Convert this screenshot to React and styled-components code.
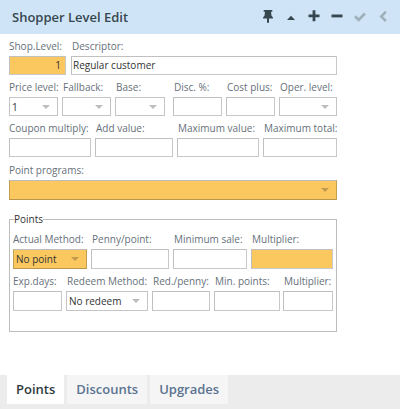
import styled, { createGlobalStyle } from "styled-components";

const YELLOW = "#fac85e";

const GlobalStyle = createGlobalStyle`
  html, body {
    margin: 0;
    padding: 0;
    background: #fff;
    font-family: "Open Sans", "Liberation Sans", sans-serif;
  }
`;

export default function App() {
  return (
    <>
      <GlobalStyle />
      <Page>
        <Header>
          <Title>Shopper Level Edit</Title>
          <Tools>
            <PinIcon />
            <UpIcon />
            <PlusIcon />
            <MinusIcon />
            <CheckIcon />
            <BackIcon />
          </Tools>
        </Header>

        <Form>
          <Row>
            <Field label="Shop.Level:" width={57} flush>
              <Input $yellow $right>1</Input>
            </Field>
            <Field label="Descriptor:" width={266} $push={1}>
              <Input>Regular customer</Input>
            </Field>
          </Row>

          <Row>
            <Field label="Price level:" width={49} flush>
              <Select value="1" />
            </Field>
            <Field label="Fallback:" width={49}>
              <Select />
            </Field>
            <Field label="Base:" width={50}>
              <Select />
            </Field>
            <Field label="Disc. %:" width={49} $push={4}>
              <Input />
            </Field>
            <Field label="Cost plus:" width={49}>
              <Input />
            </Field>
            <Field label="Oper. level:" width={58}>
              <Select />
            </Field>
          </Row>

          <Row>
            <Field label="Coupon multiply:" width={82} flush>
              <Input />
            </Field>
            <Field label="Add value:" width={78}>
              <Input />
            </Field>
            <Field label="Maximum value:" width={82}>
              <Input />
            </Field>
            <Field label="Maximum total:" width={74}>
              <Input />
            </Field>
          </Row>

          <WideRow>
            <Field label="Point programs:" width={328} flush>
              <Select yellow tall />
            </Field>
          </WideRow>

          <PointsBox>
            <PointsLegend>Points</PointsLegend>
            <BoxRow>
              <Field label="Actual Method:" width={74} flush>
                <Select yellow tall value="No point" />
              </Field>
              <Field label="Penny/point:" width={78}>
                <Input $tall />
              </Field>
              <Field label="Minimum sale:" width={74}>
                <Input $tall />
              </Field>
              <Field label="Multiplier:" width={82}>
                <Input $tall $yellow />
              </Field>
            </BoxRow>
            <BoxRow $second>
              <Field label="Exp.days:" width={49} flush>
                <Input $tall />
              </Field>
              <Field label="Redeem Method:" width={82}>
                <Select tall value="No redeem" />
              </Field>
              <Field label="Red./penny:" width={58}>
                <Input $tall />
              </Field>
              <Field label="Min. points:" width={66}>
                <Input $tall />
              </Field>
              <Field label="Multiplier:" width={50} $push={-1}>
                <Input $tall />
              </Field>
            </BoxRow>
          </PointsBox>
        </Form>

        <TabBar>
          <Tab $active>Points</Tab>
          <Tab>Discounts</Tab>
          <Tab>Upgrades</Tab>
        </TabBar>
      </Page>
    </>
  );
}

function Field({ label, width, flush, $push, children }) {
  return (
    <FieldBox style={{ width }} $push={$push}>
      <Label $flush={flush}>{label}</Label>
      {children}
    </FieldBox>
  );
}

function Select({ value, yellow, tall }) {
  return (
    <SelectBox $yellow={yellow} $tall={tall}>
      <span>{value}</span>
      <Caret $yellow={yellow} />
    </SelectBox>
  );
}

function ToolIcon({ color = "#37474f", children }) {
  return (
    <svg width="16" height="16" viewBox="0 0 16 16" fill={color}>
      {children}
    </svg>
  );
}

const PinIcon = () => (
  <ToolIcon>
    <path d="M3.700 2h8.600v1.700h-1.300l.5 4 1.400 1.500v1.300H9v4.200H7v-4.200H3.100V9.200l1.400-1.500.5-4H3.700z" />
  </ToolIcon>
);
const UpIcon = () => (
  <ToolIcon>
    <path d="M8 7.800l4 4.200H4z" />
  </ToolIcon>
);
const PlusIcon = () => (
  <ToolIcon>
    <path d="M6.600 2.300h2.800v4.100h4.100v2.800H9.400v4.100H6.600V9.200H2.500V6.400h4.100z" />
  </ToolIcon>
);
const MinusIcon = () => (
  <ToolIcon>
    <path d="M2.500 6.500h11v2.900h-11z" />
  </ToolIcon>
);
const CheckIcon = () => (
  <ToolIcon color="#9fb0bc">
    <path d="M2 9.200l2-2 2.700 2.700 5.300-5.400 2 2-7.300 7.300z" />
  </ToolIcon>
);
const BackIcon = () => (
  <ToolIcon color="#9fb0bc">
    <path d="M10 2.800l1.800 1.800L8 8.400l3.800 3.700-1.800 1.800-5.500-5.500z" />
  </ToolIcon>
);

const Page = styled.div`
  width: 400px;
  height: 409px;
  display: flex;
  flex-direction: column;
  overflow: hidden;
`;

const Header = styled.div`
  height: 34px;
  flex: none;
  display: flex;
  align-items: center;
  justify-content: space-between;
  padding: 0 9px 0 12px;
  background: #cfe5f7;
`;

const Title = styled.div`
  font-size: 13px;
  font-weight: 600;
  color: #37474f;
`;

const Tools = styled.div`
  display: flex;
  align-items: center;
  gap: 7px;
  margin-bottom: 2px;
`;

const Form = styled.div`
  width: 328px;
  margin-left: 9px;
`;

const Row = styled.div`
  display: flex;
  gap: 4px;
`;

const WideRow = styled(Row)`
  margin-top: 1px;
`;

const FieldBox = styled.div`
  flex: none;
  margin-left: ${(p) => p.$push || 0}px;
`;

const Label = styled.div`
  height: 22px;
  line-height: 24px;
  font-size: 10px;
  white-space: nowrap;
  color: #66707a;
  padding-left: ${(p) => (p.$flush ? 0 : 1)}px;
`;

const Input = styled.div`
  box-sizing: border-box;
  height: ${(p) => (p.$tall ? 20 : 19)}px;
  padding: 0 4px 0 1px;
  line-height: 17px;
  font-size: 10px;
  text-align: ${(p) => (p.$right ? "right" : "left")};
  color: #333;
  background: ${(p) => (p.$yellow ? YELLOW : "#fff")};
  border: 1px solid #c8c8c8;
  border-color: #c0c0c0 #c8c8c8 #c8c8c8 #c0c0c0;
`;

const SelectBox = styled.div`
  box-sizing: border-box;
  height: ${(p) => (p.$tall ? 20 : 19)}px;
  padding: 0 7px 0 2px;
  display: flex;
  align-items: center;
  justify-content: space-between;
  font-size: 10px;
  color: #333;
  background: ${(p) => (p.$yellow ? YELLOW : "#fff")};
  border: 1px solid #c4c4c4;
  ${(p) => p.$yellow && "border-color: #bdbdbd #c4a04e #b8964a #c4a04e;"}
`;

const Caret = styled.i`
  width: 0;
  height: 0;
  border-left: 4px solid transparent;
  border-right: 4px solid transparent;
  border-top: 4px solid ${(p) => (p.$yellow ? "#c19a50" : "#bdbdbd")};
`;

const PointsBox = styled.fieldset`
  box-sizing: border-box;
  height: 120px;
  margin: 12px 0 0;
  padding: 0 3px;
  border: 1px solid #bdbdbd;
`;

const PointsLegend = styled.legend`
  margin-left: 1px;
  padding: 0;
  font-size: 10px;
  line-height: 14px;
  color: #333;
`;

const BoxRow = styled(Row)`
  margin-top: ${(p) => (p.$second ? 0 : 1)}px;
`;

const TabBar = styled.div`
  margin-top: auto;
  height: 34px;
  flex: none;
  display: flex;
  gap: 3px;
  padding-left: 7px;
  background: #ececec;
`;

const Tab = styled.div`
  height: 29px;
  padding: 0 9px;
  line-height: 28px;
  font-size: 13px;
  font-weight: 600;
  color: ${(p) => (p.$active ? "#2f3a40" : "#5b7391")};
  background: ${(p) => (p.$active ? "#fff" : "#f5f5f5")};
`;
